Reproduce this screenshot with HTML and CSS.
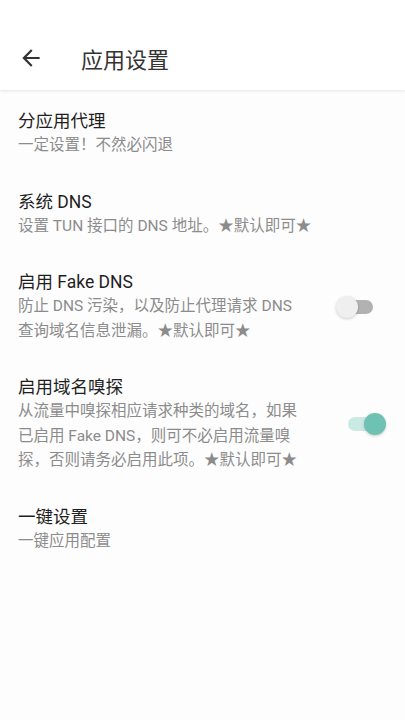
FILE: index.html
```html
<!DOCTYPE html>
<html lang="zh-CN">
<head>
    <meta charset="UTF-8">
    <meta name="viewport" content="width=device-width, initial-scale=1.0">
    <title>应用设置</title>
    <link rel="stylesheet" href="styles.css">
</head>
<body>

    <header class="app-bar">
        <button class="back-btn" aria-label="返回">
            <svg viewBox="0 0 24 24" width="26" height="26">
                <path d="M20 11H7.83l5.59-5.59L12 4l-8 8 8 8 1.41-1.41L7.83 13H20v-2z" fill="currentColor"/>
            </svg>
        </button>
        <h1>应用设置</h1>
    </header>

    <main class="pref-list">
        <div class="pref-item">
            <div class="pref-text">
                <div class="pref-title">分应用代理</div>
                <div class="pref-summary">一定设置！不然必闪退</div>
            </div>
        </div>

        <div class="pref-item">
            <div class="pref-text">
                <div class="pref-title">系统 DNS</div>
                <div class="pref-summary">设置 TUN 接口的 DNS 地址。★默认即可★</div>
            </div>
        </div>

        <div class="pref-item">
            <div class="pref-text">
                <div class="pref-title">启用 Fake DNS</div>
                <div class="pref-summary">防止 DNS 污染，以及防止代理请求 DNS<br>查询域名信息泄漏。★默认即可★</div>
            </div>
            <div class="switch switch-off"><span class="thumb"></span></div>
        </div>

        <div class="pref-item">
            <div class="pref-text">
                <div class="pref-title">启用域名嗅探</div>
                <div class="pref-summary">从流量中嗅探相应请求种类的域名，如果<br>已启用 Fake DNS，则可不必启用流量嗅<br>探，否则请务必启用此项。★默认即可★</div>
            </div>
            <div class="switch switch-on"><span class="thumb"></span></div>
        </div>

        <div class="pref-item">
            <div class="pref-text">
                <div class="pref-title">一键设置</div>
                <div class="pref-summary">一键应用配置</div>
            </div>
        </div>
    </main>

</body>
</html>
```

FILE: styles.css
```css
:root {
    --bg: #fdfdfd;
    --text-primary: #1f1f1f;
    --text-secondary: #8c8c8c;
    --accent: #6fc1b3;
    --accent-light: #cbe9e3;
}

body {
    font-family: Roboto, "Noto Sans CJK SC", sans-serif;
    background-color: var(--bg);
    color: var(--text-primary);
    margin: 0;
    min-height: 100vh;
}

/* 상단 바 */
.app-bar {
    height: 90px;
    display: flex;
    align-items: center;
    padding-top: 26px;
    box-sizing: border-box;
    background-color: #ffffff;
    box-shadow: 0 1px 3px rgba(0, 0, 0, 0.1);
}

.back-btn {
    width: 26px;
    height: 26px;
    margin-left: 18px;
    padding: 0;
    border: none;
    background: none;
    color: #333333;
    display: flex;
}

.app-bar h1 {
    margin: 0 0 0 37px;
    font-size: 22px;
    font-weight: 400;
    color: #333333;
}

/* 설정 목록 */
.pref-list {
    padding-top: 3px;
}

.pref-item {
    display: flex;
    align-items: center;
    padding: 16px 0 16px 18px;
}

.pref-text {
    flex: 1;
}

.pref-title {
    font-size: 17.5px;
    line-height: 24px;
    color: var(--text-primary);
}

.pref-summary {
    font-size: 15.5px;
    line-height: 24.5px;
    color: var(--text-secondary);
    white-space: nowrap;
}

/* 스위치 */
.switch {
    position: relative;
    width: 36px;
    height: 14px;
    border-radius: 7px;
}

.switch .thumb {
    position: absolute;
    top: -4px;
    width: 22px;
    height: 22px;
    border-radius: 50%;
    box-shadow: 0 1px 3px rgba(0, 0, 0, 0.2);
}

.switch-off {
    margin-right: 32px;
    background-color: #b2b2b2;
}

.switch-off .thumb {
    left: -1px;
    background-color: #efefef;
}

.switch-on {
    margin-right: 21px;
    background-color: var(--accent-light);
}

.switch-on .thumb {
    right: -2px;
    background-color: var(--accent);
}
```
